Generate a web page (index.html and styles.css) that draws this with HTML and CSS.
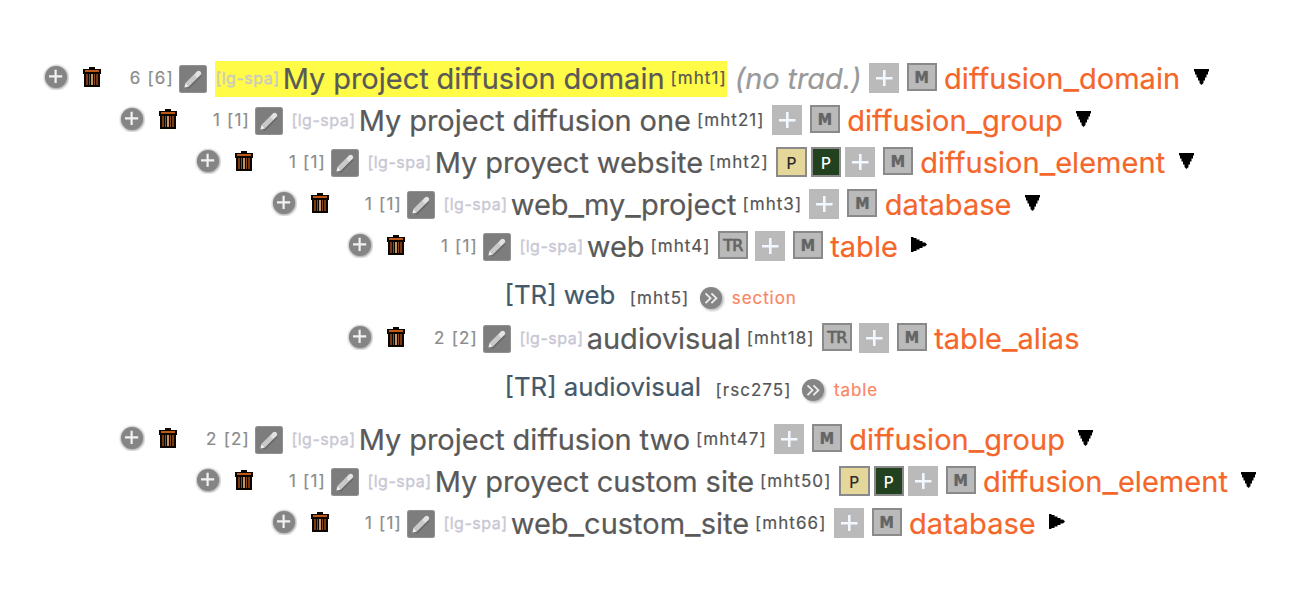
FILE: index.html
```
<!DOCTYPE html>
<html lang="en">
<head>
<meta charset="utf-8">
<title>Thesaurus tree</title>
<link rel="stylesheet" href="styles.css">
</head>
<body>
<main class="tree" id="tree"></main>
<script src="tree.js"></script>
</body>
</html>
```
FILE: styles.css
```
* { box-sizing: border-box; }
body { margin: 0; background: #fff; font-family: Inter, "Liberation Sans", sans-serif; color: #555; }
.tree { width: 1300px; height: 600px; padding-top: 61px; overflow: hidden; -webkit-text-stroke: .2px; }
.row { display: flex; align-items: flex-start; height: 42px; padding-left: 43px; white-space: nowrap; }
.level-1 { padding-left: 119px; }
.level-2 { padding-left: 195px; }
.level-3 { padding-left: 271px; }
.level-4 { padding-left: 347px; }
.row svg { display: block; flex: none; }
.add { margin-top: 3px; }
.trash { margin: 6px 0 0 14px; }
.count { width: 73px; text-align: right; font-size: 17px; line-height: 34px; color: #8b8b8b; letter-spacing: 1.2px; }
.edit { margin: 4px 8px 0 5px; }
.term { display: flex; height: 36px; }
.marked { background: #fffb46; }
.lang { width: 67.7px; padding-left: .4px; font-size: 16px; line-height: 35px; color: #c9c8d4; letter-spacing: .5px; -webkit-text-stroke: .4px; }
.marked .lang { color: #cccbc0; }
.name, .model { font-size: 29px; line-height: 36px; }
.name { color: #595959; word-spacing: -.3px; }
.under { font-size: 34px; line-height: 0; }
.id { font-size: 17px; line-height: 34px; margin-left: 6px; letter-spacing: 1.05px; }
.missing { font-size: 29px; line-height: 36px; font-style: italic; color: #999; margin-left: 8px; letter-spacing: -.1px; }
.tools { display: flex; margin-left: 7.3px; }
.box { flex: none; width: 30px; height: 28px; margin: 2px 8px 0 0; border: 2px solid #8a8a8a; background: #bababa; color: #656565; font: bold 16px/26px "DejaVu Sans", sans-serif; font-stretch: condensed; text-align: center; text-shadow: 0 0 1px #777; -webkit-text-stroke: 0; }
.tr { margin-right: 7px; font-weight: 400; font-stretch: normal; letter-spacing: -.8px; -webkit-text-stroke: .5px #656565; }
.plus { margin: 2px 8px 0 0; }
.publish { width: 31px; height: 30px; margin-right: 4px; background: #e5d699; color: #2b2b2b; font: 500 15.5px/30px Inter, sans-serif; text-shadow: none; }
.dark { width: 30px; background: #22421f; color: #fff; }
.model { color: #f4662a; margin-left: -.7px; letter-spacing: .03px; }
.arrow { margin: 8px 0 0 13.5px; }
.relation { height: 50px; padding-left: 504.5px; }
.relation.last { height: 59px; }
.related { font-size: 25.8px; line-height: 47px; color: #43596a; }
.relation .id { line-height: 54px; margin-left: 14.5px; }
.go { margin: 14px 0 0 9px; }
.target { font-size: 17px; line-height: 54px; margin-left: 6.5px; color: #fa8562; letter-spacing: .9px; }
```
FILE: tree.js
```
const add = `<svg class="add" width="26" height="26" viewBox="0 0 26 26"><defs><filter id="soft" x="-20%" y="-20%" width="140%" height="140%"><feGaussianBlur stdDeviation="1"/></filter></defs><circle cx="13.4" cy="13.6" r="12" fill="#aaa" filter="url(#soft)"/><circle cx="13" cy="13" r="11" fill="#858585"/><path d="M12.6 5.8v13.2M6 12.4h13.2" stroke="#f2f2f2" stroke-width="2.2"/></svg>`;
const trash = `<svg class="trash" width="18" height="20" viewBox="0 0 18 20"><path d="M6 0h6v2h6v5h-1v13H1V7H0V2h6z" fill="#0b0500"/><path d="M2 3h14v2H2z" fill="#bd5816"/><path d="M3 7h2v11H3zM13 7h2v11h-2z" fill="#7a3a11"/><path d="M6 7h1v11H6zM11 7h1v11h-1z" fill="#8b4a1c"/><path d="M8 7h2v11H8z" fill="#c29367"/></svg>`;
const edit = `<svg class="edit" width="28" height="28" viewBox="0 0 28 28"><rect width="28" height="28" rx="2.5" fill="#909090"/><rect x="1" y="1" width="26" height="26" rx="1.5" fill="#7d7d7d"/><path d="M8 22L20.5 9.5" stroke="#686868" stroke-width="5.5"/><path d="M8.4 19.6L17.4 10.6" stroke="#c9c9c9" stroke-width="5"/><path d="M18.2 9.8L19.7 8.3" stroke="#e2e2e2" stroke-width="5" stroke-linecap="round"/><path d="M5.4 22.6l1.2-4.8 3.6 3.6z" fill="#ececec"/></svg>`;
const plus = `<svg class="plus" width="30" height="30" viewBox="0 0 30 30"><path d="M0 0h30v30H0z" fill="#bababa"/><path d="M15.3 7v16M7 15.3h16.5" stroke="#f2f8ff" stroke-width="2.6"/></svg>`;
const go = `<svg class="go" width="27" height="27" viewBox="0 0 27 27"><circle cx="14.5" cy="14.5" r="11.3" fill="#bbb" filter="url(#soft)"/><circle cx="13" cy="13" r="11.1" fill="#858585"/><path d="M7.5 8.3l5 4.9-5 4.9M13.4 8.3l5 4.9-5 4.9" fill="none" stroke="#eee" stroke-width="1.8"/></svg>`;
const arrows = {
  down: `<svg class="arrow" width="15" height="16" viewBox="0 0 15 16"><path d="M0 0h15v2.5h-1v3h-1.5v3H11v3H9.5V14L7.5 16l-2-2v-2.5H4v-3H2.5v-3H1v-3H0z"/></svg>`,
  right: `<svg class="arrow" width="16" height="15" viewBox="0 0 16 15"><path d="M0 0h2.5v1h3v1.5h3V4h3v1.5H14l2 2-2 2h-2.5V11h-3v1.5h-3V14h-3v1H0z"/></svg>`
};
const tools = {
  tr: '<span class="box tr">TR</span>',
  pp: '<span class="box publish">P</span><span class="box publish dark">P</span>'
};
const rows = [
  { level: 0, count: '6 [6]', name: 'My project diffusion domain', id: 'mht1', marked: true, missing: '(no trad.)', model: 'diffusion_domain', arrow: 'down' },
  { level: 1, count: '1 [1]', name: 'My project diffusion one', id: 'mht21', model: 'diffusion_group', arrow: 'down' },
  { level: 2, count: '1 [1]', name: 'My proyect website', id: 'mht2', tool: 'pp', model: 'diffusion_element', arrow: 'down' },
  { level: 3, count: '1 [1]', name: 'web_my_project', id: 'mht3', model: 'database', arrow: 'down' },
  { level: 4, count: '1 [1]', name: 'web', id: 'mht4', tool: 'tr', model: 'table', arrow: 'right' },
  { related: 'web', id: 'mht5', target: 'section' },
  { level: 4, count: '2 [2]', name: 'audiovisual', id: 'mht18', tool: 'tr', model: 'table_alias' },
  { related: 'audiovisual', id: 'rsc275', target: 'table', last: true },
  { level: 1, count: '2 [2]', name: 'My project diffusion two', id: 'mht47', model: 'diffusion_group', arrow: 'down' },
  { level: 2, count: '1 [1]', name: 'My proyect custom site', id: 'mht50', tool: 'pp', model: 'diffusion_element', arrow: 'down' },
  { level: 3, count: '1 [1]', name: 'web_custom_site', id: 'mht66', model: 'database', arrow: 'right' }
];
const wide = text => text.replace(/_/g, '<span class="under">_</span>');
document.getElementById('tree').innerHTML = rows.map(r => r.related
  ? `<div class="row relation${r.last ? ' last' : ''}"><span class="related">[TR] ${r.related}</span><span class="id">[${r.id}]</span>${go}<span class="target">${r.target}</span></div>`
  : `<div class="row level-${r.level}">${add}${trash}<span class="count">${r.count}</span>${edit}<div class="term${r.marked ? ' marked' : ''}"><span class="lang">[lg-spa]</span><span class="name">${wide(r.name)}</span><span class="id">[${r.id}]</span></div>${r.missing ? `<span class="missing">${r.missing}</span>` : ''}<div class="tools">${tools[r.tool] || ''}${plus}<span class="box">M</span></div><span class="model">${wide(r.model)}</span>${arrows[r.arrow] || ''}</div>`
).join('');
```
